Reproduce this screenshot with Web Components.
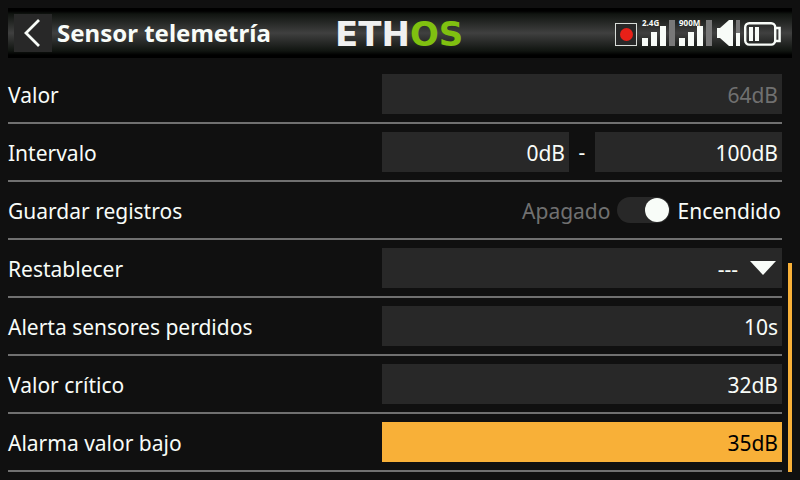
<!DOCTYPE html>
<html lang="es">
<head>
<meta charset="utf-8">
<title>Sensor telemetría</title>
<style>
html { background: #101010; }
body { margin: 0; padding: 8px; color: #f8fcf8; font: 21px/28px "Noto Sans", sans-serif; }
</style>
</head>
<body>
<ethos-screen></ethos-screen>
<script>
function define(name, html, setup) {
  const template = document.createElement('template');
  template.innerHTML = html;
  customElements.define(name, class extends HTMLElement {
    constructor() {
      super();
      this.attachShadow({ mode: 'open' }).append(template.content.cloneNode(true));
    }
    connectedCallback() { if (setup) setup(this, this.shadowRoot); }
  });
}

define('ethos-logo', `
<style>
:host { display: block; }
svg { display: block; }
text { font: bold 34px "DejaVu Sans", sans-serif; }
.a { fill: #f0f0f0; }
.b { fill: #80c010; }
</style>
<svg width="132" height="46" viewBox="0 0 132 46" role="img" aria-label="ETHOS">
  <text x="3" y="36"><tspan class="a">ETH</tspan><tspan class="b">OS</tspan></text>
</svg>`);

define('ethos-status', `
<style>
:host { display: block; }
svg { display: block; }
text { font: bold 8px "Noto Sans", sans-serif; fill: #f8fcf8; }
</style>
<svg width="168" height="30" viewBox="0 0 168 30" shape-rendering="crispEdges">
  <rect x="1.5" y="5.5" width="21" height="22" fill="#282828" stroke="#d8dcd8"/>
  <circle cx="12.5" cy="16.5" r="6.5" fill="#e82018" shape-rendering="auto"/>
  <g fill="#f8fcf8">
    <path d="M28 20h6v8h-6zM37 14h6v14h-6zM46 8h6v20h-6zM65 20h6v8h-6zM74 14h6v14h-6zM83 8h6v20h-6z"/>
    <path d="M103 10h3l9-8h4v26h-4l-9-8h-3z" shape-rendering="auto"/>
    <path d="M122 15h4v13h-4z"/>
    <path d="M135 9h4v14h-4zM141 9h4v14h-4z"/>
  </g>
  <path fill="#787878" d="M55 2h6v26h-6zM92 2h6v26h-6zM122 2h4v13h-4z"/>
  <g fill="none" stroke="#f8fcf8" stroke-width="2.4" shape-rendering="auto">
    <rect x="131.2" y="5.2" width="30" height="21.4" rx="4"/>
    <path d="M161 10h4.600v13H161"/>
  </g>
  <text x="28" y="8">2.4G</text>
  <text x="65" y="8">900M</text>
</svg>`);

define('ethos-header', `
<style>
:host { display: grid; grid-template-columns: 1fr auto 1fr; align-items: center; height: 50px; padding: 0 10px 0 6px; box-sizing: border-box;
  background: linear-gradient(#000 0, #000 6%, #101410 12%, #404040 50%, #101410 86%, #000 94%, #000); }
.left { display: flex; align-items: center; gap: 5px; }
button { width: 38px; height: 38px; padding: 0; border: 0; background: #282828; flex: none; }
svg { display: block; }
h1 { margin: 0; font-size: 24px; line-height: 32px; font-weight: 700; white-space: nowrap; }
ethos-status { justify-self: end; }
</style>
<div class="left">
  <button type="button" aria-label="Atrás"><svg width="38" height="38" viewBox="0 0 38 38"><path d="M25 6 12 19l13 13" fill="none" stroke="#f8fcf8" stroke-width="2.8"/></svg></button>
  <h1><slot></slot></h1>
</div>
<ethos-logo></ethos-logo>
<ethos-status></ethos-status>`);

define('ethos-row', `
<style>
:host { display: grid; grid-template-columns: 1fr 400px; align-items: center; padding: 8px 0; border-bottom: 2px solid #707070; }
.control { display: flex; align-items: center; justify-content: flex-end; min-height: 40px; }
.label { padding-top: 2px; white-space: nowrap; }
</style>
<div class="label"></div>
<div class="control"><slot></slot></div>`, (el, root) => {
  root.querySelector('.label').textContent = el.getAttribute('label');
});

define('ethos-field', `
<style>
:host { display: block; flex: 1; min-width: 0; }
input { display: block; width: 100%; height: 40px; box-sizing: border-box; margin: 0; padding: 2px 4px 0; border: 0; border-radius: 0; outline: 0;
  background: #282828; color: inherit; font: inherit; text-align: right; }
input:disabled { color: #707070; }
:host([active]) input { background: #f8b038; color: #000; }
</style>
<input type="text">`, (el, root) => {
  const input = root.querySelector('input');
  input.value = el.getAttribute('value');
  input.disabled = el.hasAttribute('disabled');
  input.setAttribute('aria-label', el.getAttribute('label'));
});

define('ethos-dash', `
<style>:host { display: block; width: 26px; text-align: center; }</style>
<slot></slot>`);

define('ethos-toggle', `
<style>
:host { display: block; }
label { display: flex; align-items: center; gap: 7px; padding-right: 1px; }
span { padding-top: 2px; }
.off { color: #707070; }
input { appearance: none; display: flex; justify-content: flex-end; box-sizing: border-box; width: 53px; height: 26px; margin: 0; padding: 1px; border-radius: 13px; background: #282828; }
input::before { content: ""; width: 24px; height: 24px; border-radius: 50%; background: #f8fcf8; }
input:not(:checked) { justify-content: flex-start; }
</style>
<label><span class="off">Apagado</span><input type="checkbox" role="switch" checked><span>Encendido</span></label>`);

define('ethos-select', `
<style>
:host { display: grid; flex: 1; align-items: center; }
select, svg { grid-area: 1 / 1; }
select { appearance: none; width: 100%; height: 40px; margin: 0; padding: 2px 44px 0 4px; border: 0; border-radius: 0; background: #282828; color: inherit; font: inherit; text-align: right; text-align-last: right; }
svg { justify-self: end; margin-right: 5px; pointer-events: none; }
</style>
<select><option>---</option></select>
<svg width="28" height="14" viewBox="0 0 28 14"><path d="M1 0h26L14 14z" fill="#f8fcf8"/></svg>`, (el, root) => {
  root.querySelector('select').setAttribute('aria-label', el.getAttribute('label'));
});

define('ethos-screen', `
<style>
:host { display: block; }
main { display: flex; gap: 6px; padding-top: 8px; }
form { flex: 1; min-width: 0; }
.track { width: 4px; display: flex; align-items: flex-end; }
.thumb { width: 4px; height: 209px; background: #f8b038; }
</style>
<ethos-header>Sensor telemetría</ethos-header>
<main>
  <form>
    <ethos-row label="Valor"><ethos-field label="Valor" value="64dB" disabled></ethos-field></ethos-row>
    <ethos-row label="Intervalo"><ethos-field label="Intervalo, mínimo" value="0dB"></ethos-field><ethos-dash>-</ethos-dash><ethos-field label="Intervalo, máximo" value="100dB"></ethos-field></ethos-row>
    <ethos-row label="Guardar registros"><ethos-toggle></ethos-toggle></ethos-row>
    <ethos-row label="Restablecer"><ethos-select label="Restablecer"></ethos-select></ethos-row>
    <ethos-row label="Alerta sensores perdidos"><ethos-field label="Alerta sensores perdidos" value="10s"></ethos-field></ethos-row>
    <ethos-row label="Valor crítico"><ethos-field label="Valor crítico" value="32dB"></ethos-field></ethos-row>
    <ethos-row label="Alarma valor bajo"><ethos-field label="Alarma valor bajo" value="35dB" active></ethos-field></ethos-row>
  </form>
  <div class="track"><div class="thumb"></div></div>
</main>`);
</script>
</body>
</html>
